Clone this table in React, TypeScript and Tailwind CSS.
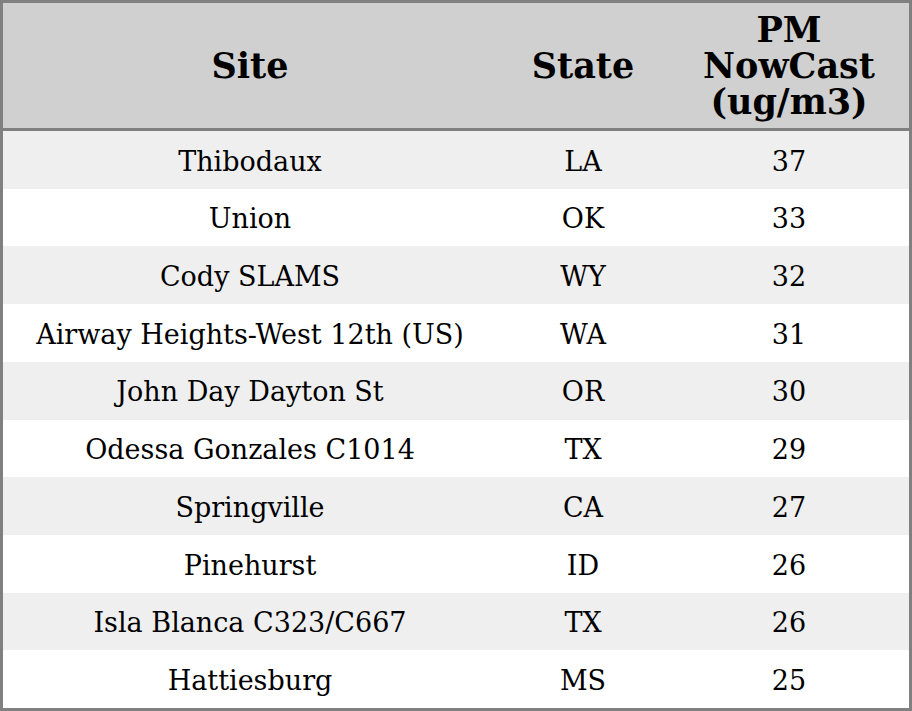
import React from 'react';

type Row = { site: string; state: string; pm: number };

const rows: Row[] = [
  { site: 'Thibodaux', state: 'LA', pm: 37 },
  { site: 'Union', state: 'OK', pm: 33 },
  { site: 'Cody SLAMS', state: 'WY', pm: 32 },
  { site: 'Airway Heights-West 12th (US)', state: 'WA', pm: 31 },
  { site: 'John Day Dayton St', state: 'OR', pm: 30 },
  { site: 'Odessa Gonzales C1014', state: 'TX', pm: 29 },
  { site: 'Springville', state: 'CA', pm: 27 },
  { site: 'Pinehurst', state: 'ID', pm: 26 },
  { site: 'Isla Blanca C323/C667', state: 'TX', pm: 26 },
  { site: 'Hattiesburg', state: 'MS', pm: 25 },
];

const App: React.FC = () => {
  return (
    <div className="w-[912px] h-[711px] bg-white font-['DejaVu_Serif',serif] text-black">
      <div className="h-full border-[3px] border-[#808080] flex flex-col">
        {/* Header */}
        <div className="grid grid-cols-[494px_172px_240px] h-[128px] shrink-0 bg-[#d0d0d0] border-b-[3px] border-[#808080] text-[35px] font-bold leading-[36px]">
          <div className="flex items-center justify-center">Site</div>
          <div className="flex items-center justify-center">State</div>
          <div className="flex flex-col items-center justify-center text-center">
            <span className="leading-[36px]">PM</span>
            <span className="leading-[36px]">NowCast</span>
            <span className="leading-[36px]">(ug/m3)</span>
          </div>
        </div>

        {/* Body rows */}
        <div className="flex-1 flex flex-col">
          {rows.map((r, i) => (
            <div
              key={i}
              className={`flex-1 grid grid-cols-[494px_172px_240px] items-center text-center text-[27px] pt-1 ${
                i % 2 === 0 ? 'bg-[#efefef]' : 'bg-white'
              }`}
            >
              <div>{r.site}</div>
              <div>{r.state}</div>
              <div>{r.pm}</div>
            </div>
          ))}
        </div>
      </div>
    </div>
  );
};

export default App;
